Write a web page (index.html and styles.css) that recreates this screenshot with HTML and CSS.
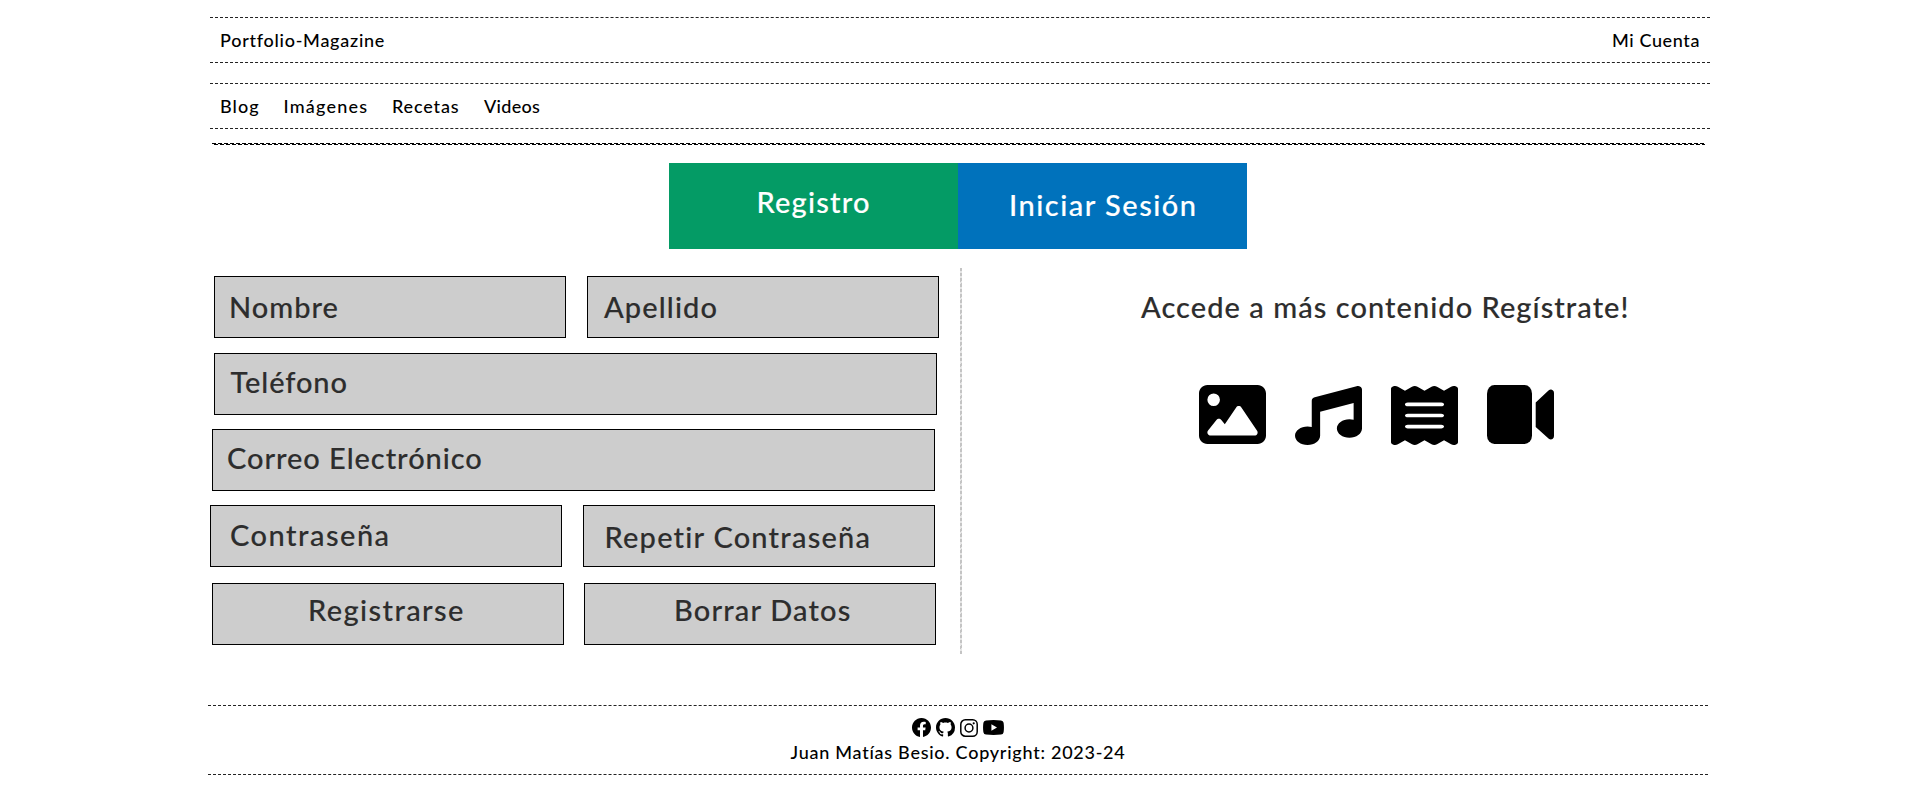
FILE: index.html
```html
<!DOCTYPE html>
<html lang="es">
<head>
<meta charset="utf-8">
<title>Portfolio-Magazine</title>
<link rel="stylesheet" href="styles.css">
</head>
<body>
<header class="bar top"><a class="t-brand">Portfolio-Magazine</a><a class="t-account">Mi Cuenta</a></header>
<nav class="bar menu"><a class="t-blog">Blog</a><a class="t-images">Imágenes</a><a class="t-recipes">Recetas</a><a class="t-videos">Videos</a></nav>
<div class="rule"></div>
<div class="tabs">
  <a class="tab register">Registro</a>
  <a class="tab login">Iniciar Sesión</a>
</div>
<main class="content">
  <form class="form">
    <div class="row r1"><div class="field t-name">Nombre</div><div class="field t-last">Apellido</div></div>
    <div class="row r2"><div class="field wide t-phone">Teléfono</div></div>
    <div class="row r3"><div class="field wide t-mail">Correo Electrónico</div></div>
    <div class="row r4"><div class="field t-pass">Contraseña</div><div class="field t-repeat">Repetir Contraseña</div></div>
    <div class="row r5"><div class="field t-send">Registrarse</div><div class="field t-clear">Borrar Datos</div></div>
  </form>
  <div class="divider"></div>
  <section class="promo">
    <h2>Accede a más contenido Regístrate!</h2>
    <div class="media">
      <svg viewBox="0 32 512 448" preserveAspectRatio="none"><path d="M0 96C0 60.7 28.7 32 64 32l384 0c35.3 0 64 28.7 64 64l0 320c0 35.3-28.7 64-64 64L64 480c-35.3 0-64-28.7-64-64L0 96zM323.8 202.5c-4.5-6.6-11.9-10.5-19.8-10.5s-15.4 3.9-19.8 10.5l-87 127.6L170.7 297c-4.6-5.7-11.5-9-18.7-9s-14.2 3.3-18.7 9l-64 80c-5.8 7.2-6.9 17.1-2.9 25.4s12.4 13.6 21.6 13.6l96 0 32 0 208 0c8.9 0 17.1-4.9 21.2-12.8s3.6-17.4-1.4-24.7l-120-176zM112 192a48 48 0 1 0 0-96 48 48 0 1 0 0 96z"/></svg>
      <svg class="low" viewBox="0 0 512 512" preserveAspectRatio="none"><path d="M499.1 6.3c8.1 6 12.9 15.6 12.9 25.7v72V368c0 44.2-43 80-96 80s-96-35.8-96-80s43-80 96-80c11.2 0 22 1.6 32 4.6V147L192 223.8V432c0 44.2-43 80-96 80s-96-35.8-96-80s43-80 96-80c11.2 0 22 1.6 32 4.6V200 128c0-14.1 9.3-26.6 22.8-30.7l320-96c9.7-2.9 20.2-1.1 28.3 5z"/></svg>
      <svg class="low" viewBox="0 0 384 512" preserveAspectRatio="none"><path d="M14 2.2C22.5-1.7 32.5-.3 39.6 5.8L80 40.4 120.4 5.8c9-7.7 22.3-7.7 31.2 0L192 40.4 232.4 5.8c9-7.7 22.3-7.7 31.2 0L304 40.4 344.4 5.8c7.1-6.1 17.1-7.5 25.6-3.6s14 12.4 14 21.8V488c0 9.4-5.5 17.9-14 21.8s-18.5 2.5-25.6-3.6L304 471.6l-40.4 34.6c-9 7.7-22.3 7.7-31.2 0L192 471.6l-40.4 34.6c-9 7.7-22.3 7.7-31.2 0L80 471.6 39.6 506.2c-7.1 6.1-17.1 7.5-25.6 3.6S0 497.4 0 488V24C0 14.6 5.5 6.1 14 2.2zM96 144c-8.8 0-16 7.2-16 16s7.2 16 16 16H288c8.8 0 16-7.2 16-16s-7.2-16-16-16H96zM80 352c0 8.8 7.2 16 16 16H288c8.8 0 16-7.2 16-16s-7.2-16-16-16H96c-8.8 0-16 7.2-16 16zM96 240c-8.8 0-16 7.2-16 16s7.2 16 16 16H288c8.8 0 16-7.2 16-16s-7.2-16-16-16H96z"/></svg>
      <svg viewBox="0 0 67 59"><rect width="45" height="59" rx="7.5" ry="8.5"/><path d="M48.7 17.5 61.5 5.6Q64 3.6 66 5.6 67 6.5 67 8V51Q67 53 65.5 54 63.5 55 61.5 53.4L48.7 42Z"/></svg>
    </div>
  </section>
</main>
<footer class="footer">
  <div class="social">
    <svg width="19" height="19" viewBox="0 0 16 16"><path d="M16 8.049c0-4.446-3.582-8.05-8-8.05C3.58 0-.002 3.603-.002 8.05c0 4.017 2.926 7.347 6.75 7.951v-5.625h-2.03V8.05H6.75V6.275c0-2.017 1.195-3.131 3.022-3.131.876 0 1.791.157 1.791.157v1.98h-1.009c-.993 0-1.303.621-1.303 1.258v1.51h2.218l-.354 2.326H9.25V16c3.824-.604 6.75-3.934 6.75-7.951"/></svg>
    <svg width="19" height="19" viewBox="0 0 16 16"><path d="M8 0C3.58 0 0 3.58 0 8c0 3.54 2.29 6.53 5.47 7.59.4.07.55-.17.55-.38 0-.19-.01-.82-.01-1.49-2.01.37-2.53-.49-2.69-.94-.09-.23-.48-.94-.82-1.13-.28-.15-.68-.52-.01-.53.63-.01 1.08.58 1.23.82.72 1.21 1.87.87 2.33.66.07-.52.28-.87.51-1.07-1.78-.2-3.64-.89-3.64-3.95 0-.87.31-1.59.82-2.15-.08-.2-.36-1.02.08-2.12 0 0 .67-.21 2.2.82.64-.18 1.32-.27 2-.27s1.36.09 2 .27c1.53-1.04 2.2-.82 2.2-.82.44 1.1.16 1.92.08 2.12.51.56.82 1.27.82 2.15 0 3.07-1.87 3.75-3.65 3.95.29.25.54.73.54 1.48 0 1.07-.01 1.93-.01 2.2 0 .21.15.46.55.38A8.01 8.01 0 0 0 16 8c0-4.42-3.58-8-8-8"/></svg>
    <svg width="18" height="18" viewBox="0 0 18 18"><g fill="none" stroke="#000" stroke-width="1.5"><rect x=".8" y=".8" width="16.4" height="16.4" rx="4.5"/><circle cx="9" cy="9" r="3.9"/></g><circle cx="13.7" cy="4.3" r="1.1"/></svg>
    <svg width="21" height="15" viewBox="0 0 21 15"><path fill-rule="evenodd" d="M3 .4Q10.5-.4 18 .4 20.2.7 20.6 2.8 21.3 7.5 20.6 12.2 20.2 14.3 18 14.6 10.5 15.4 3 14.6.8 14.3.4 12.2-.3 7.5.4 2.8.8.7 3 .4ZM8.4 4.3V10.7L14 7.5Z"/></svg>
  </div>
  <p class="copy">Juan Matías Besio. Copyright: 2023-24</p>
</footer>
</body>
</html>
```
FILE: styles.css
```css
*{box-sizing:border-box}
body{margin:0;padding:17px 0 0 210px;background:#fff;color:#000;font:500 18px/24px Lato,sans-serif;font-variant-ligatures:none}
svg{display:block}
.bar{display:flex;align-items:center;width:1500px;height:46px;border:dashed #222;border-width:1px 0;padding:0 10px 1px 10px}
.top{justify-content:space-between}
.menu{margin-top:20px}
.t-brand{letter-spacing:.74px}
.t-account{letter-spacing:.6px}
.t-blog{width:63.5px;letter-spacing:1.1px}
.t-images{width:108.5px;letter-spacing:1.2px}
.t-recipes{width:92px;letter-spacing:.85px}
.t-videos{letter-spacing:.3px}

/* two dashed strands, the lower one shifted */
.rule{width:1493px;height:2px;margin:14px 0 0 2px;background:
  repeating-linear-gradient(90deg,#000 0 4px,transparent 4px 6px) 0 0/100% 1px no-repeat,
  repeating-linear-gradient(90deg,transparent 0 2px,#000 2px 6px) 0 1px/100% 1px no-repeat}

.tabs{display:flex;margin:18px 0 0 459px}
.tab{width:289px;height:86px;display:flex;align-items:center;color:#fff;font-size:29px;-webkit-text-stroke:.15px #fff}
.register{background:#049b65;padding:0 0 8px 87.5px;letter-spacing:1.2px}
.login{background:#0072bc;padding:0 0 2px 51px;letter-spacing:1.5px}

.content{display:flex;height:386px;margin-top:19px}
.form{width:750px;padding-top:8px;font-size:29px;color:#2d2d2d;-webkit-text-stroke:.15px #2d2d2d}
.row{display:flex;gap:21px}
.r1{margin-left:4px}
.r2{margin:15px 0 0 4px}
.r3{margin:14px 0 0 2px}
.r4{margin-top:14px}
.r5{margin:16px 0 0 2px;gap:20px}
.field{width:352px;height:62px;border:1px solid #000;background:#cdcdcd;display:flex;align-items:center}
.wide{width:723px}
.t-name{padding-left:14px;letter-spacing:1px}
.t-last{padding-left:16px;letter-spacing:1.13px}
.t-phone{padding:0 0 4px 15.5px;letter-spacing:.9px}
.t-mail{padding:0 0 4px 14px;letter-spacing:.95px}
.t-pass{padding:0 0 2px 19px;letter-spacing:1.5px}
.t-repeat{padding:2px 0 0 20.5px;letter-spacing:1.22px}
.t-send{padding:0 0 8px 95px;letter-spacing:1.4px}
.t-clear{padding:0 0 8px 89px;letter-spacing:1.17px}

.divider{width:2px;background:repeating-linear-gradient(160deg,#c4c4c4 0 3px,#e6e6e6 3px 5px)}
.promo{padding:21px 0 0 179px;color:#2d2d2d}
h2{margin:0;font:500 29px/36px Lato,sans-serif;letter-spacing:1.05px;white-space:nowrap;-webkit-text-stroke:.15px #2d2d2d}
.media{display:flex;gap:29px;margin:60px 0 0 58px}
.media svg{width:67px;height:59px;fill:#000}
.media .low{margin-top:1px}

.footer{width:1500px;height:70px;margin:51px 0 0 -2px;border:dashed #222;border-width:1px 0;padding-top:12px}
.social{display:flex;justify-content:center;align-items:center;gap:5px;height:19px}
.copy{margin:3px 0 0;text-align:center;letter-spacing:.74px}
```
